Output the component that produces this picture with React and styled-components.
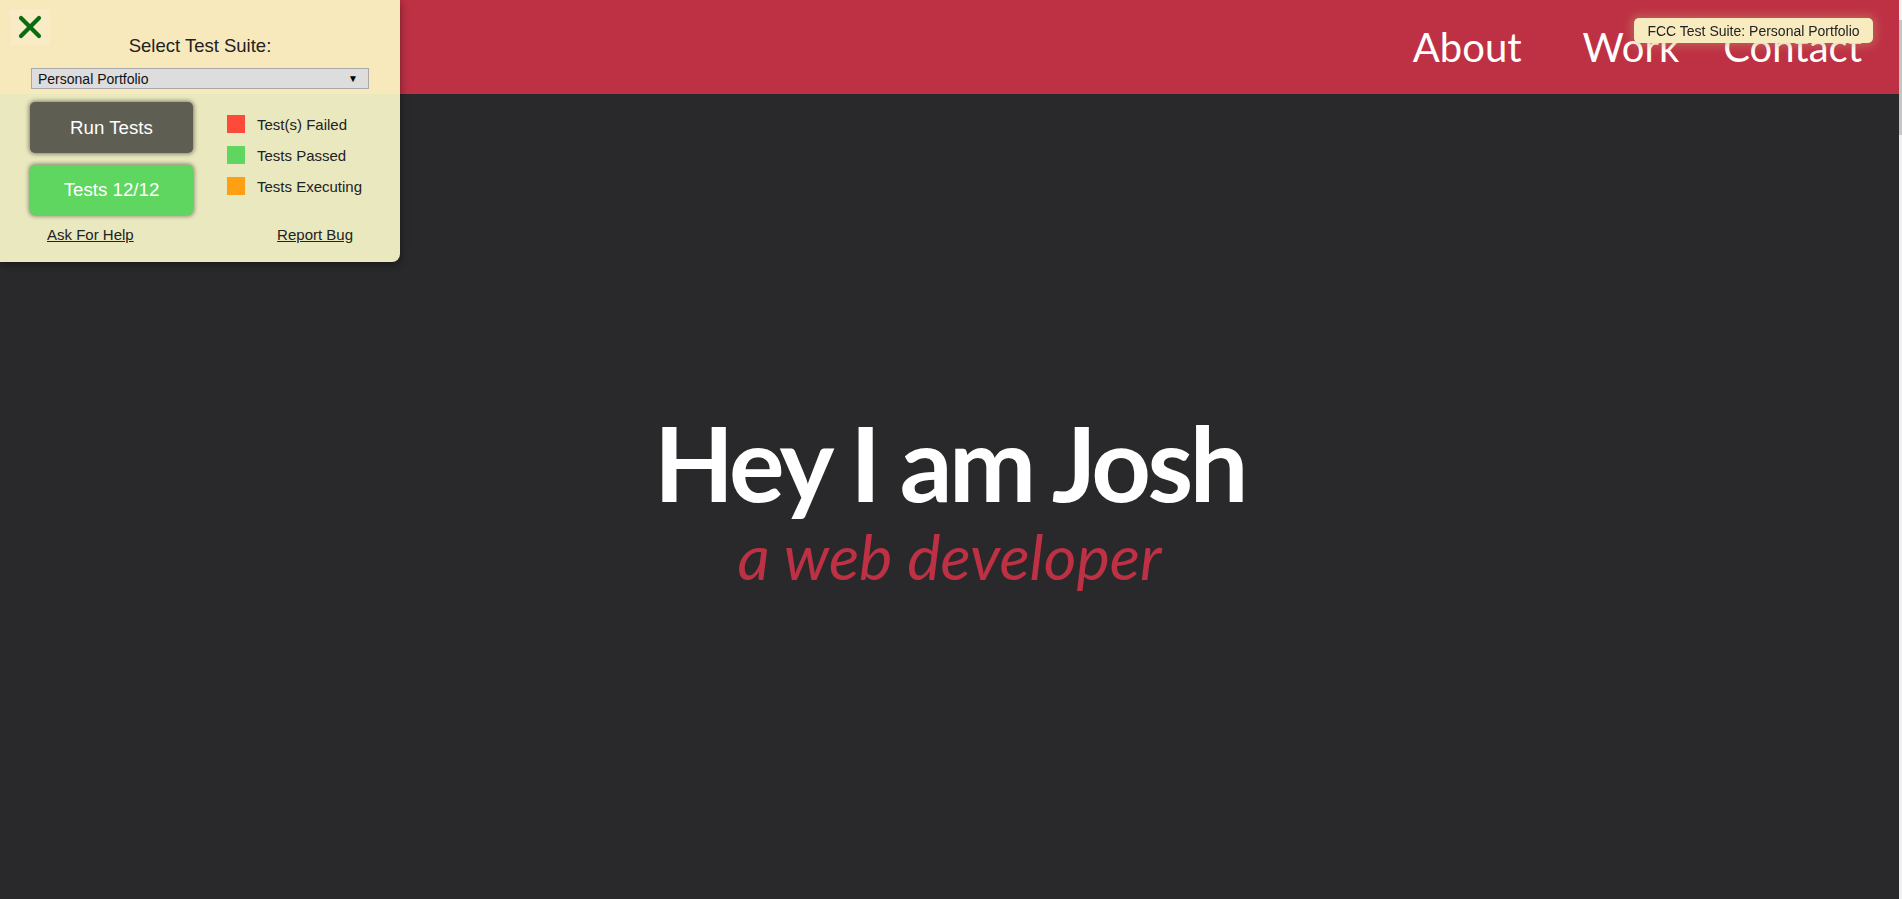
import React from "react";
import styled, { createGlobalStyle } from "styled-components";

const Global = createGlobalStyle`
  html, body { margin: 0; padding: 0; height: 100%; }
  body { background: #29292c; overflow: hidden; }
  #root { min-height: 100vh; }
  * { box-sizing: border-box; }
`;

const Page = styled.div`
  display: flex;
  flex-direction: column;
  height: 899px;
  width: 1899px;
  background: #29292c;
  font-family: Lato, "Open Sans", sans-serif;
`;

const NavBar = styled.nav`
  height: 94px;
  flex: none;
  background: #be3144;
  display: flex;
  justify-content: flex-end;
  align-items: center;
  padding-right: 37px;
`;

const NavLink = styled.a`
  color: #fff;
  font-family: Lato, sans-serif;
  font-size: 40px;
  text-decoration: none;
  line-height: 1;
  margin-left: ${(p) => p.$space || 0}px;
`;

const Hero = styled.section`
  flex: 1;
  display: flex;
  flex-direction: column;
  align-items: center;
  justify-content: center;
  padding-bottom: 4px;
`;

const Title = styled.h1`
  margin: 0;
  color: #fff;
  font-family: Lato, sans-serif;
  font-weight: 700;
  font-size: 104px;
  letter-spacing: -3.4px;
  line-height: 122px;
`;

const Subtitle = styled.p`
  margin: 0;
  color: #be3144;
  font-family: Lato, sans-serif;
  font-style: italic;
  font-weight: 400;
  font-size: 63px;
  line-height: 65px;
`;

const Panel = styled.div`
  position: fixed;
  top: 0;
  left: 0;
  width: 400px;
  z-index: 10;
  font-family: "Liberation Sans", Arial, sans-serif;
  color: #222;
  border-bottom-right-radius: 8px;
  box-shadow: 0 2px 8px rgba(0, 0, 0, 0.45);
`;

const PanelHead = styled.div`
  height: 94px;
  background: #f8e9bd;
  display: flex;
  flex-direction: column;
  align-items: center;
  padding: 35px 31px 0;
`;

const CloseButton = styled.button`
  position: absolute;
  top: 9px;
  left: 10px;
  width: 40px;
  height: 36px;
  border: none;
  padding: 0;
  background: rgba(255, 255, 255, 0.12);
  display: flex;
  align-items: center;
  justify-content: center;
  cursor: pointer;
`;

const SuiteLabel = styled.label`
  font-size: 18.5px;
  line-height: 22px;
  color: #222;
`;

const SuiteSelect = styled.div`
  margin-top: 11px;
  width: 338px;
  height: 21px;
  background: #dddddd;
  border: 1px solid #a9a9a9;
  display: flex;
  align-items: center;
  justify-content: space-between;
  padding: 0 10px 0 6px;
  font-size: 14px;
  color: #111;
`;

const Arrow = styled.span`
  font-size: 10px;
  color: #000;
`;

const PanelBody = styled.div`
  background: #e9e8bf;
  border-bottom-right-radius: 8px;
  padding: 8px 0 18px;
`;

const Controls = styled.div`
  display: grid;
  grid-template-columns: 163px 1fr;
  column-gap: 34px;
  padding-left: 30px;
`;

const Buttons = styled.div`
  display: flex;
  flex-direction: column;
  gap: 12px;
`;

const TestButton = styled.button`
  height: ${(p) => (p.$tall ? 51 : 50)}px;
  border: none;
  border-radius: 5px;
  background: ${(p) => p.$bg};
  color: #fff;
  font-family: "Liberation Sans", Arial, sans-serif;
  font-size: 18.7px;
  box-shadow: 0 0 4px 1px rgba(40, 40, 30, 0.55);
  cursor: pointer;
`;

const Legend = styled.ul`
  list-style: none;
  margin: 13px 0 0;
  padding: 0;
  display: flex;
  flex-direction: column;
  gap: 13px;
`;

const LegendItem = styled.li`
  display: flex;
  align-items: center;
  gap: 12px;
  height: 18px;
  font-size: 15px;
  color: #222;
`;

const Swatch = styled.span`
  width: 18px;
  height: 18px;
  background: ${(p) => p.$color};
  flex: none;
`;

const Links = styled.div`
  display: flex;
  justify-content: space-between;
  padding: 0 47px;
  margin-top: 11px;
  font-size: 15px;
  line-height: 18px;
`;

const PanelLink = styled.a`
  color: #222;
  text-decoration: underline;
`;

const Tooltip = styled.div`
  position: fixed;
  top: 18px;
  left: 1634px;
  width: 239px;
  height: 25px;
  background: #f9ebc0;
  border-radius: 5px;
  box-shadow: 0 0 10px 3px rgba(200, 150, 110, 0.45);
  font-family: "Liberation Sans", Arial, sans-serif;
  font-size: 14px;
  color: #222;
  display: flex;
  align-items: center;
  justify-content: center;
  z-index: 11;
`;

const ScrollTrack = styled.div`
  position: fixed;
  top: 0;
  right: 0;
  width: 3px;
  height: 899px;
  background: #f1f1f1;
  z-index: 12;
`;

const ScrollThumb = styled.div`
  margin-top: 20px;
  height: 115px;
  background: #c6c6c9;
`;

function CloseIcon() {
  return (
    <svg width="24" height="24" viewBox="0 0 24 24">
      <path
        d="M3 3 L21 21 M21 3 L3 21"
        stroke="#0b6b10"
        strokeWidth="4.2"
        strokeLinecap="round"
        fill="none"
      />
    </svg>
  );
}

export default function App() {
  return (
    <>
      <Global />
      <Page>
        <NavBar>
          <NavLink href="#about">About</NavLink>
          <NavLink href="#work" $space={61}>Work</NavLink>
          <NavLink href="#contact" $space={44}>Contact</NavLink>
        </NavBar>
        <Hero>
          <Title>Hey I am Josh</Title>
          <Subtitle>a web developer</Subtitle>
        </Hero>
      </Page>

      <Panel>
        <CloseButton aria-label="close">
          <CloseIcon />
        </CloseButton>
        <PanelHead>
          <SuiteLabel>Select Test Suite:</SuiteLabel>
          <SuiteSelect>
            <span>Personal Portfolio</span>
            <Arrow>▼</Arrow>
          </SuiteSelect>
        </PanelHead>
        <PanelBody>
          <Controls>
            <Buttons>
              <TestButton $bg="#5f5e52" $tall>Run Tests</TestButton>
              <TestButton $bg="#5fd65f">Tests 12/12</TestButton>
            </Buttons>
            <Legend>
              <LegendItem>
                <Swatch $color="#fd4a3b" />
                Test(s) Failed
              </LegendItem>
              <LegendItem>
                <Swatch $color="#5fd65f" />
                Tests Passed
              </LegendItem>
              <LegendItem>
                <Swatch $color="#ff9f14" />
                Tests Executing
              </LegendItem>
            </Legend>
          </Controls>
          <Links>
            <PanelLink href="#help">Ask For Help</PanelLink>
            <PanelLink href="#bug">Report Bug</PanelLink>
          </Links>
        </PanelBody>
      </Panel>

      <Tooltip>FCC Test Suite: Personal Portfolio</Tooltip>
      <ScrollTrack>
        <ScrollThumb />
      </ScrollTrack>
    </>
  );
}
